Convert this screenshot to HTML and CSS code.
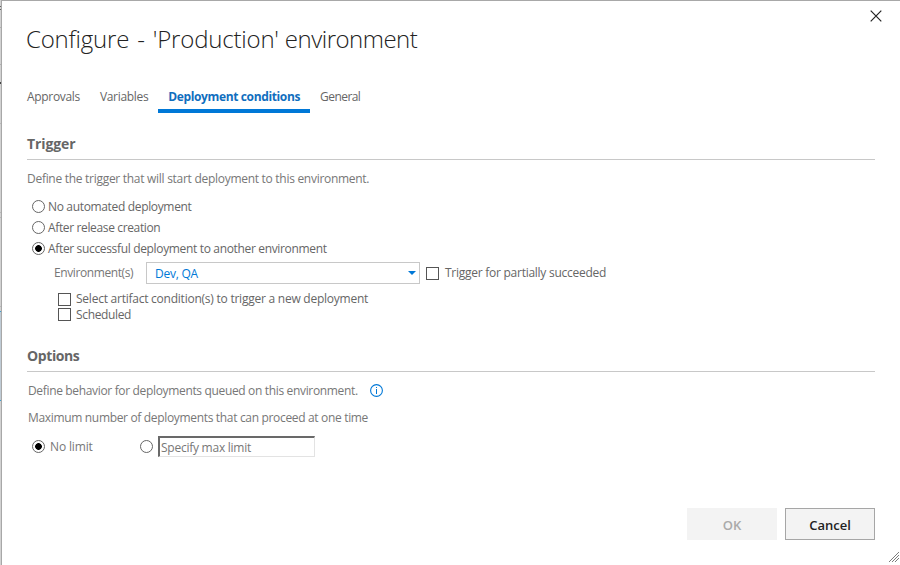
FILE: index.html
```html
<!DOCTYPE html>
<html lang="en">
<head>
<meta charset="utf-8">
<title>Configure environment</title>
<link rel="stylesheet" href="styles.css">
</head>
<body>
<div class="backdrop"></div>
<main class="dialog">
  <header class="head">
    <h1><span class="verb">Configure - </span>'Production' <span class="noun">environment</span></h1>
    <svg class="close" width="12" height="12" viewBox="0 0 12 12"><path d="M.7.7 11.3 11.3M11.3.7.7 11.3" stroke="#222" stroke-width="1.2" fill="none"/></svg>
  </header>
  <nav class="tabs">
    <a>Approvals</a><a>Variables</a><a class="active">Deployment conditions</a><a>General</a>
  </nav>
  <section class="trigger">
    <h2>Trigger</h2>
    <p class="desc">Define the trigger that will start deployment to this environment.</p>
    <label class="opt"><i class="radio"></i><span>No automated deployment</span></label>
    <label class="opt"><i class="radio"></i><span class="t-release">After release creation</span></label>
    <label class="opt"><i class="radio on"></i><span>After successful deployment to another environment</span></label>
    <div class="env">
      <span class="env-label">Environment(s)</span>
      <div class="combo"><span>Dev, QA</span><svg width="8" height="4" viewBox="0 0 8 4"><path d="M0 0h8L4 4z" fill="#0078d7"/></svg></div>
      <i class="check"></i><span class="t-partial">Trigger for partially succeeded</span>
    </div>
    <label class="sub"><i class="check"></i><span>Select artifact condition(s) to trigger a new deployment</span></label>
    <label class="sub second"><i class="check"></i><span>Scheduled</span></label>
  </section>
  <section class="options">
    <h2>Options</h2>
    <p class="queued"><span>Define behavior for deployments queued on this environment.</span>
      <svg width="13" height="13" viewBox="0 0 13 13"><circle cx="6.5" cy="6.5" r="5.9" fill="none" stroke="#0078d7" stroke-width="1.1"/><path d="M6 3h1v1H6zM6 5h1v5H6z" fill="#0078d7"/></svg></p>
    <p class="max">Maximum number of deployments that can proceed at one time</p>
    <div class="limits">
      <i class="radio on"></i><span class="nolimit">No limit</span>
      <i class="radio"></i><div class="field">Specify max limit</div>
    </div>
  </section>
  <footer class="actions">
    <button class="ok" disabled>OK</button><button class="cancel">Cancel</button>
  </footer>
  <svg class="grip" width="10" height="10" viewBox="0 0 10 10"><path d="M0 10 10 0M3 10l7-7M6 10l4-4" stroke="#555" fill="none"/></svg>
</main>
</body>
</html>
```
FILE: styles.css
```css
* { box-sizing: border-box; }
body { margin: 0; width: 900px; height: 565px; overflow: hidden; display: flex; background: #fff; font: 12px/16px "Open Sans", "Noto Sans", sans-serif; color: #666; letter-spacing: -.32px; }
h1, h2, p { margin: 0; font-weight: 400; white-space: nowrap; }
span { white-space: nowrap; }
.backdrop { width: 1px; height: 565px; background: linear-gradient(#d2d2d2 0 6px, #666 6px 7px, #d2d2d2 7px 9px, #666 9px 10px, #d2d2d2 10px 27px, #b0b0b0 27px 28px, #d2d2d2 28px 64px, #b0b0b0 64px 65px, #d2d2d2 65px 82px, #444 82px 84px, #d2d2d2 84px 123px, #b8b8b8 123px 124px, #d2d2d2 124px 212px, #b8b8b8 212px 213px, #d2d2d2 213px 217px, #b8b8b8 217px 218px, #d2d2d2 218px 306px, #b8b8b8 306px 307px, #d2d2d2 307px 311px, #3f9fd0 311px 312px, #bfcbd5 312px 400px, #3f9fd0 400px 401px, #d2d2d2 401px); }
.dialog { position: relative; width: 899px; height: 565px; border-left: 1px solid #a8a8a8; border-top: 1px solid #a8a8a8; padding-left: 25px; background: #fff; }
.head { display: flex; justify-content: space-between; height: 88px; padding: 9px 18px 0 0; }
h1 { padding-top: 12px; margin-left: -1px; font-size: 24px; line-height: 34px; font-weight: 300; color: #222; letter-spacing: -.19px; }
.verb { word-spacing: 2px; }
.noun { letter-spacing: -.5px; }
.tabs { display: flex; height: 24px; margin-left: -10px; }
.tabs a { padding: 0 10px; height: 24px; }
.tabs a:last-child { letter-spacing: -.55px; }
.tabs .active { color: #106ebe; font-weight: 700; border-bottom: 4px solid #0078d7; letter-spacing: -.37px; }
section { width: 848px; }
h2 { font-size: 14px; line-height: 20px; font-weight: 700; border-bottom: 1px solid #c8c8c8; height: 26px; letter-spacing: -.25px; }
.options h2 { letter-spacing: -.4px; }
.trigger h2 { letter-spacing: -.1px; }
.trigger { padding-top: 21px; height: 233px; }
.desc { height: 36px; padding-top: 11px; color: #777; letter-spacing: -.285px; }
.opt { display: flex; align-items: center; height: 21px; padding-left: 5px; gap: 3px; letter-spacing: -.34px; }
.opt .t-release { letter-spacing: -.36px; }
.radio { width: 13px; height: 13px; border: 1px solid #666; border-radius: 50%; flex: none; background: #fff; }
.radio.on { background: radial-gradient(circle, #000 0 3px, #fff 3.7px); }
.check { width: 13px; height: 13px; border: 1px solid #555; flex: none; background: #fff; }
.env { display: flex; align-items: center; height: 28px; padding-left: 27px; }
.env-label { width: 92px; color: #777; letter-spacing: -.4px; }
.combo { width: 274px; height: 22px; border: 1px solid #c8c8c8; padding: 3px 3px 0 8px; display: flex; justify-content: space-between; color: #0078d7; margin-right: 6px; letter-spacing: -.25px; }
.combo svg { margin-top: 5px; }
.t-partial { margin-left: 6px; letter-spacing: -.26px; }
.sub { display: flex; align-items: center; height: 16px; gap: 5px; padding-left: 31px; letter-spacing: -.24px; }
.sub.second { letter-spacing: -.35px; }
.second .check { margin-bottom: 2px; }
.env + .sub { margin-top: 4px; }
.options { height: 162px; }
.queued { display: flex; gap: 12px; padding: 11px 0 0 1px; height: 38px; color: #777; align-items: flex-start; letter-spacing: -.34px; }
.queued svg { margin-top: 1px; }
.max { padding-left: 1px; height: 25px; color: #777; letter-spacing: -.33px; }
.limits { display: flex; align-items: center; padding-left: 5px; height: 22px; color: #777; letter-spacing: -.25px; }
.nolimit { width: 95px; padding: 2px 0 0 5px; letter-spacing: -.15px; }
.field { width: 157px; height: 21px; margin-left: 5px; border: solid; border-width: 2px 1px 1px 2px; border-color: #696969 #e3e3e3 #e3e3e3 #696969; padding: 1px 0 0 1px; line-height: 18px; }
.actions { display: flex; justify-content: flex-end; gap: 8px; width: 848px; }
button { width: 90px; height: 32px; padding: 2px 0 0; border: 1px solid #a6a6a6; background: #f3f3f3; color: #222; font: 600 13px/20px "Open Sans", sans-serif; }
.ok { border-color: #f3f3f3; color: #aaa; }
.grip { position: absolute; right: 1px; bottom: 3px; }
.grip path { stroke-dasharray: 1.1 .31; }
```
